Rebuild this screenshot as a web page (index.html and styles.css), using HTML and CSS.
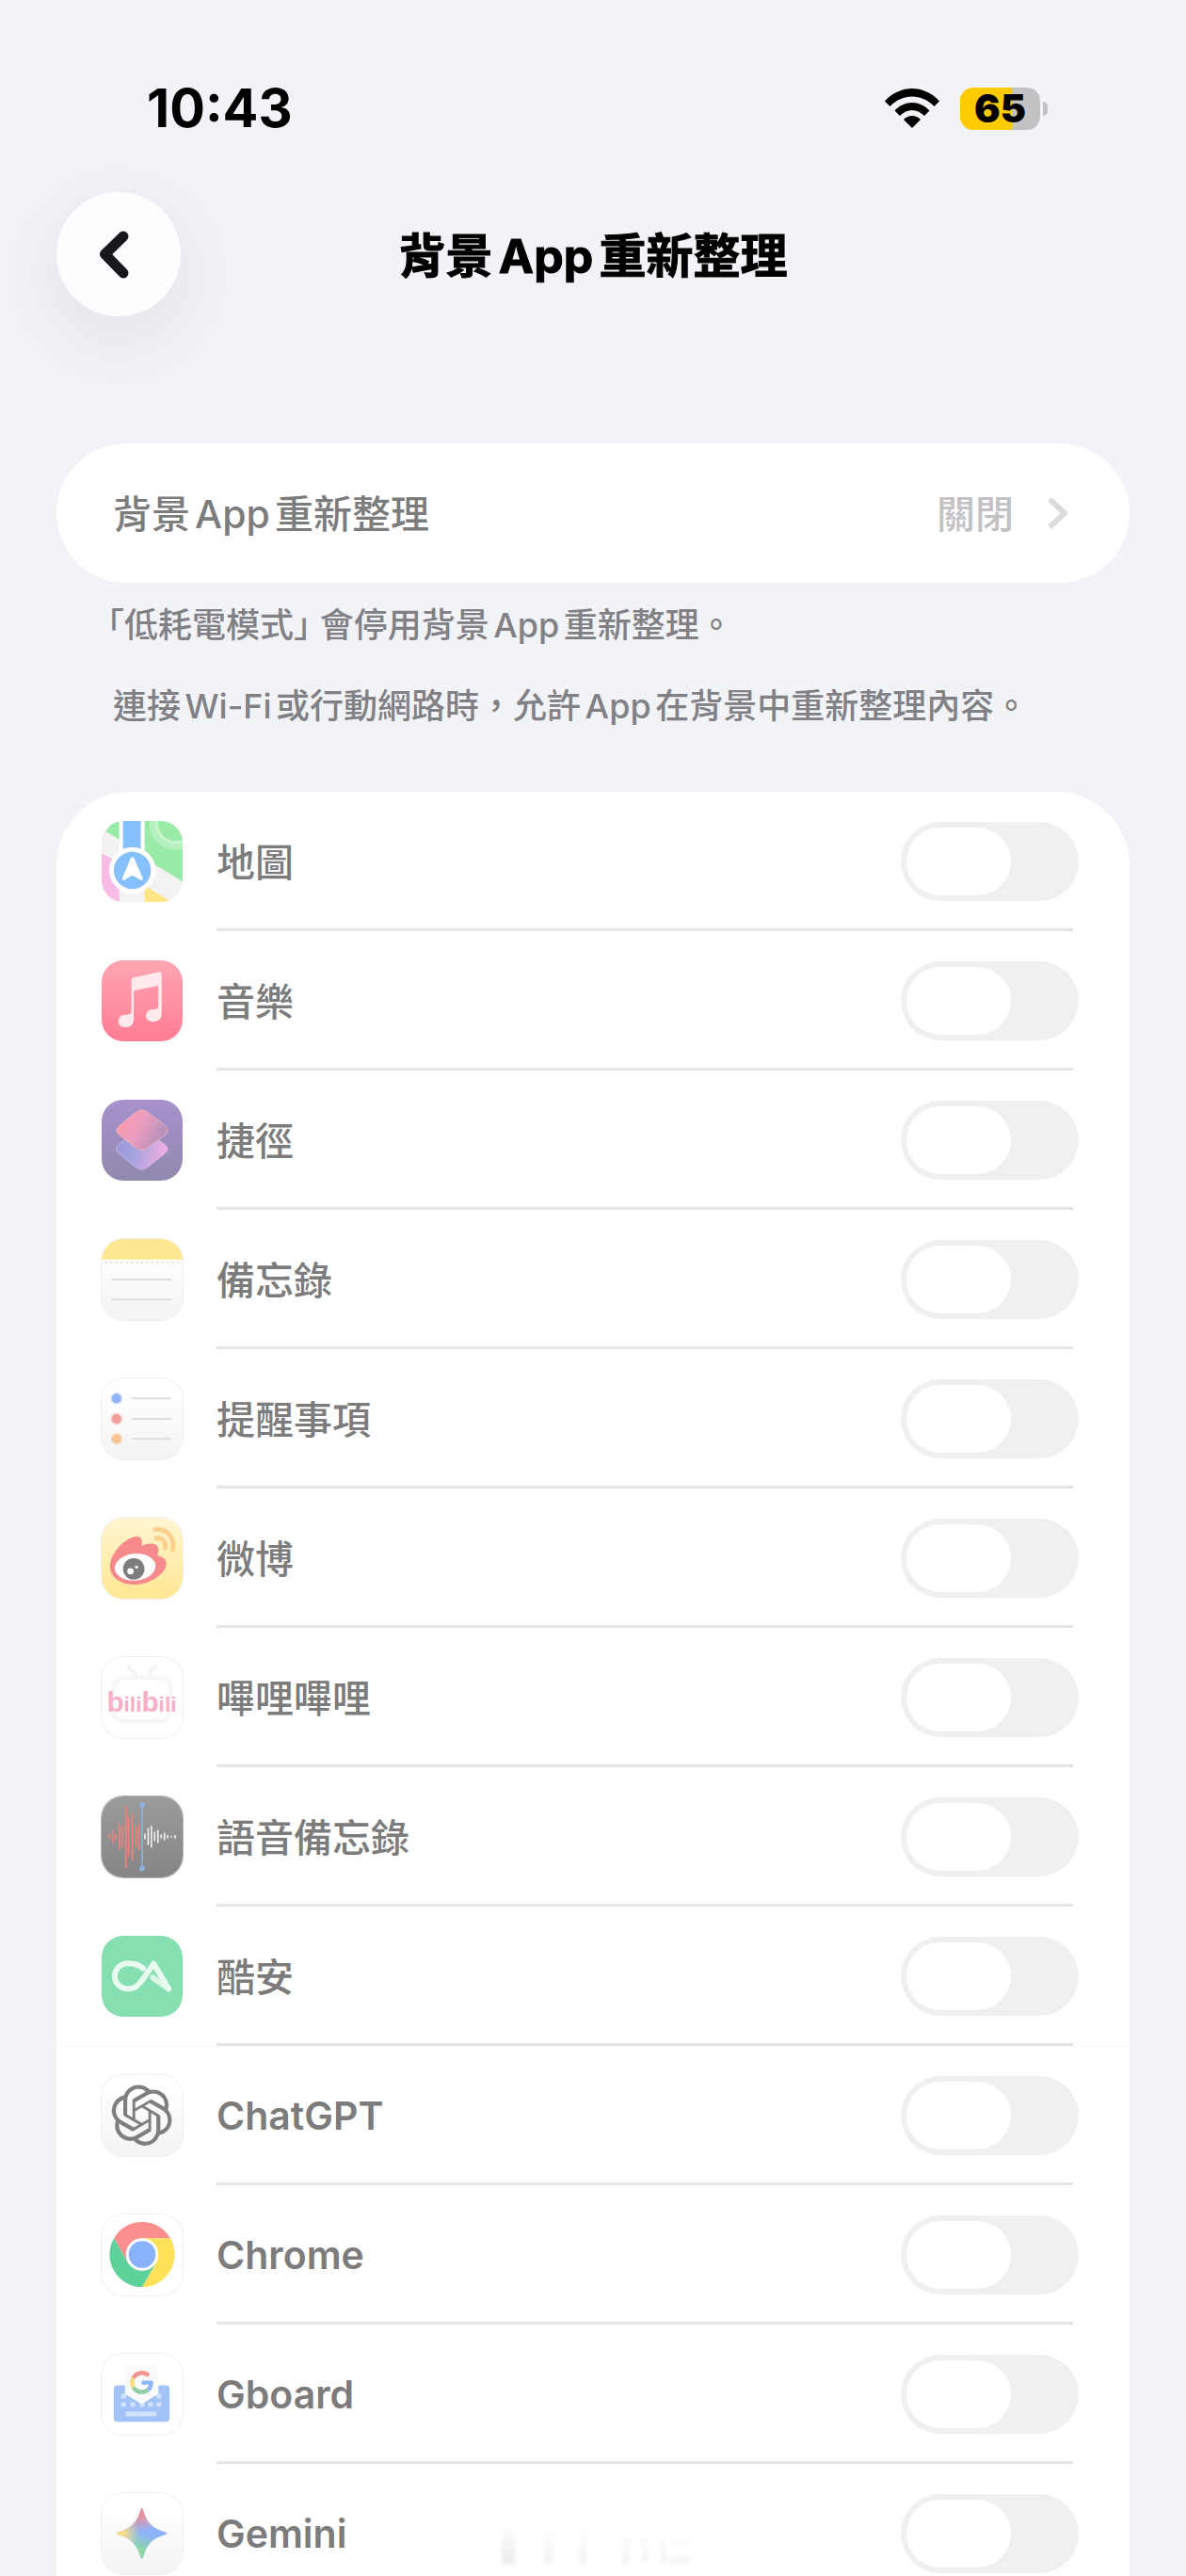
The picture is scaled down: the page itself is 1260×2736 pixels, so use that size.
FILE: index.html
```html
<!DOCTYPE html>
<html lang="zh-TW">
<head>
<meta charset="utf-8">
<meta name="viewport" content="width=device-width, initial-scale=1">
<title>背景 App 重新整理</title>
<link rel="stylesheet" href="styles.css">
</head>
<body>
<div class="screen">
  <div class="status">
    <span class="time">10:43</span>
    <div class="indicators">
      <svg class="wifi" viewBox="0 0 58 42" aria-label="Wi-Fi">
        <path d="M0 13.500C16-4.500 42-4.500 58 13.500L52.500 19C39 5 19 5 5.500 19Z"/>
        <path d="M10.500 23.500C21 12 37 12 47.500 23.500L42 29C34 21 24 21 16 29Z"/>
        <path d="M20 33C25 27.500 33 27.500 38 33L29 42Z"/>
      </svg>
      <div class="battery"><span class="battery-level">65</span></div>
    </div>
  </div>

  <header class="nav">
    <button class="back" type="button" aria-label="返回">
      <svg viewBox="0 0 132 132"><path d="M71 47 51.500 66 71 86"/></svg>
    </button>
    <h1>背景App重新整理</h1>
  </header>

  <main class="content">
    <button class="card link-row" type="button">
      <span>背景App重新整理</span>
      <span class="value">關閉</span>
      <svg class="chevron" viewBox="0 0 22 34"><path d="M4 4 18 17 4 30"/></svg>
    </button>
    <p class="hint quoted"><span class="half">「</span>低耗電模式<span class="half">」</span> 會停用背景App重新整理。</p>
    <p class="hint second">連接Wi-Fi或行動網路時，允許App在背景中重新整理內容。</p>

    <ul class="card apps">
      <li><label class="app">
        <svg class="icon" viewBox="0 0 87 87">
          <rect width="87" height="87" fill="#f3f3f3"/>
          <path d="M0 18 12 0H19V20L4 11Z" fill="#9aeaa8"/>
          <path d="M46 0H87V65L46 40Z" fill="#9aeaa8"/>
          <circle cx="80" cy="2" r="25" fill="none" stroke="#b5f1bf" stroke-width="8"/>
          <circle cx="80" cy="2" r="21" fill="none" stroke="#c9f5d0" stroke-width="3"/>
          <path d="M0 35 19 44V87H0Z" fill="#f9bce6"/>
          <path d="M46 69 75 87H46Z" fill="#ffe583"/>
          <path d="M19 0H46V50H19Z" fill="#fff"/>
          <path d="M23 0H42V40H23Z" fill="#86c0fd"/>
          <circle cx="33" cy="53" r="25" fill="#fff"/>
          <circle cx="33" cy="53" r="20" fill="#86c0fd"/>
          <path d="M33 39C34.500 39 35 40 35.500 41.500L44 61C45 64 43 64.500 41 63L33 58.500 25 63C23 64.500 21 64 22.500 61L30.500 41.500C31 40 31.500 39 33 39Z" fill="#fff"/>
        </svg>
        <span class="name">地圖</span><input class="switch" type="checkbox" role="switch" disabled></label></li>
      <li><label class="app">
        <svg class="icon" viewBox="0 0 87 87">
          <defs><linearGradient id="music" x2="0" y2="1"><stop stop-color="#ffa5b4"/><stop offset="1" stop-color="#ff7d93"/></linearGradient></defs>
          <rect width="87" height="87" fill="url(#music)"/>
          <path d="M32 21Q32 19 34 18.500L62 12.500Q64.500 12 64.500 15V57C64.500 63 60.500 66 55.500 66 51 66 47.500 63.500 47.500 59.500 47.500 55 51 52.500 55 52.500 59 52.500 61 52 61 49V29Q61 27 59 27.500L36.500 32Q34.500 32.500 34.500 34V63C34.500 69 30.500 72 26 72 21 72 18 69.500 18 65.500 18 61 21.500 58.500 25.500 58.500 29.500 58 32 58 32 54Z" fill="#ffe9ed"/>
        </svg>
        <span class="name">音樂</span><input class="switch" type="checkbox" role="switch" disabled></label></li>
      <li><label class="app">
        <svg class="icon" viewBox="0 0 87 87">
          <defs>
            <linearGradient id="sc" x2="0" y2="1"><stop stop-color="#a791cd"/><stop offset="1" stop-color="#9189ae"/></linearGradient>
            <linearGradient id="sc1" x1="0" y1="0" x2="1" y2=".4"><stop stop-color="#fb9ba4"/><stop offset=".5" stop-color="#ee9dbe"/><stop offset="1" stop-color="#b792bb"/></linearGradient>
            <linearGradient id="sc2" x1="0" y1="0" x2="1" y2=".2"><stop stop-color="#9a95d6"/><stop offset=".45" stop-color="#a3a3e0"/><stop offset="1" stop-color="#eeaee0"/></linearGradient>
          </defs>
          <rect width="87" height="87" fill="url(#sc)"/>
          <path d="M36 35Q43 29 50 35L68 48Q74 53 68 58L50 72Q43 78 36 72L19 58Q13 53 19 48Z" fill="url(#sc2)" stroke="#c9b5e4" stroke-width="1"/>
          <path d="M36 14Q43 8 50 14L68 28Q74 33 68 38L50 51Q43 57 36 51L19 38Q13 33 19 28Z" fill="url(#sc1)" stroke="#f0b0c4" stroke-width="1"/>
        </svg>
        <span class="name">捷徑</span><input class="switch" type="checkbox" role="switch" disabled></label></li>
      <li><label class="app">
        <svg class="icon outlined" viewBox="0 0 87 87">
          <defs><linearGradient id="paper" x2="0" y2="1"><stop offset=".2" stop-color="#fff"/><stop offset="1" stop-color="#f3f3f3"/></linearGradient></defs>
          <rect width="87" height="87" fill="url(#paper)"/>
          <rect width="87" height="22" fill="#ffe791"/>
          <path d="M4 25H86" stroke="#d6d6d6" stroke-width="1.500" stroke-dasharray="2 3.500"/>
          <path d="M11 43.500H75M11 65H75" stroke="#dedede" stroke-width="2"/>
        </svg>
        <span class="name">備忘錄</span><input class="switch" type="checkbox" role="switch" disabled></label></li>
      <li><label class="app">
        <svg class="icon outlined" viewBox="0 0 87 87">
          <rect width="87" height="87" fill="url(#paper)"/>
          <g stroke-width="3" stroke-opacity=".35">
          <circle cx="16" cy="21.500" r="5" fill="#8fb4fb" stroke="#8fb4fb"/>
          <circle cx="16" cy="43.500" r="5" fill="#f29c97" stroke="#f29c97"/>
          <circle cx="16" cy="65" r="5" fill="#f7c393" stroke="#f7c393"/></g>
          <path d="M32 21.500H75M32 43.500H75M32 65H75" stroke="#dedede" stroke-width="2"/>
        </svg>
        <span class="name">提醒事項</span><input class="switch" type="checkbox" role="switch" disabled></label></li>
      <li><label class="app">
        <svg class="icon outlined" viewBox="0 0 87 87">
          <defs><linearGradient id="wb" x2="0" y2="1"><stop stop-color="#fff6d2"/><stop offset="1" stop-color="#ffe793"/></linearGradient></defs>
          <rect width="87" height="87" fill="url(#wb)"/>
          <path d="M9 52C9 40 22 23 37 20 43 19 44 25 43 30 49 27 60 26 61 33 62 37 59 40 61 41 66 43 69 44 69.500 49 70 57 60 65 50 69 40 73 27 73 19 68 12 64 9 58 9 52Z" fill="#f68a8d"/>
          <ellipse cx="36" cy="53" rx="22" ry="14.500" fill="#fff" transform="rotate(-5 36 53)"/>
          <circle cx="34.500" cy="55" r="11.500" fill="#7d7d7d"/>
          <circle cx="31" cy="57.500" r="3.500" fill="#fff"/><circle cx="37.500" cy="53" r="1.700" fill="#fff"/>
          <path d="M57.500 12.500C70 11 79 21 76.500 34.500M58.500 22C65 21 69.500 26 68 32" fill="none" stroke="#ffcf8d" stroke-width="5" stroke-linecap="round"/>
        </svg>
        <span class="name">微博</span><input class="switch" type="checkbox" role="switch" disabled></label></li>
      <li><label class="app">
        <svg class="icon outlined" viewBox="0 0 87 87">
          <rect width="87" height="87" fill="#fff"/>
          <path d="M29 11 36 19M57 11 50 19" stroke="#f6f6f6" stroke-width="5" stroke-linecap="round"/>
          <rect x="13" y="22" width="61" height="47" rx="11" fill="none" stroke="#f7f7f7" stroke-width="5"/>
          <text class="bili" x="43" y="59"><tspan class="bili-b">b</tspan>ili<tspan class="bili-b">b</tspan>ili</text>
        </svg>
        <span class="name">嗶哩嗶哩</span><input class="switch" type="checkbox" role="switch" disabled></label></li>
      <li><label class="app">
        <svg class="icon rim" viewBox="0 0 87 87">
          <defs><linearGradient id="vm" x2="0" y2="1"><stop stop-color="#9b9b9b"/><stop offset="1" stop-color="#858585"/></linearGradient></defs>
          <rect width="87" height="87" fill="url(#vm)"/>
          <path d="M8 41V45M12 37V50M15 40V46M19 28V58M22 31V55M26 10V77M29 22V64M33 18V69M37 32V54M40 29V58" stroke="#e0857f" stroke-width="2"/>
          <path d="M46.500 40V46M50 34V52M53.500 31V55M57 38V48M60.500 36V50M64 41V45M67.500 39V47M71 41.500V45M75 42.500V44M79 41.500V45" stroke="#efefef" stroke-width="1.700"/>
          <path d="M43.500 9V77" stroke="#8ab4e6" stroke-width="1.700"/>
          <circle cx="43.500" cy="9" r="2.800" fill="#8ab4e6"/><circle cx="43.500" cy="77.500" r="2.800" fill="#8ab4e6"/>
        </svg>
        <span class="name">語音備忘錄</span><input class="switch" type="checkbox" role="switch" disabled></label></li>
      <li class="seam"><label class="app">
        <svg class="icon" viewBox="0 0 87 87">
          <rect width="87" height="87" fill="#86dfb1"/>
          <g fill="none" stroke-width="6" stroke-linecap="round" stroke-linejoin="round">
          <path d="M55 45 72 57" stroke="#dbf6e7"/>
          <path d="M44.500 35C40 30.500 34 29.500 28 29.500 20 30 14 36 14 43.500 14 51 20 57 28 57 36 57 40 53 44 47L56 30 72 57" stroke="#e9faf1"/></g>
        </svg>
        <span class="name">酷安</span><input class="switch" type="checkbox" role="switch" disabled></label></li>
      <li><label class="app">
        <svg class="icon outlined" viewBox="0 0 87 87">
          <rect width="87" height="87" fill="url(#paper)"/>
          <path transform="translate(10.500 10.500) scale(2.720)" fill="#7f7f7f" d="M22.2819 9.8211a5.9847 5.9847 0 0 0-.5157-4.9108 6.0462 6.0462 0 0 0-6.5098-2.9A6.0651 6.0651 0 0 0 4.9807 4.1818a5.9847 5.9847 0 0 0-3.9977 2.9 6.0462 6.0462 0 0 0 .7427 7.0966 5.98 5.98 0 0 0 .511 4.9107 6.051 6.051 0 0 0 6.5146 2.9001A5.9847 5.9847 0 0 0 13.2599 24a6.0557 6.0557 0 0 0 5.7718-4.2058 5.9894 5.9894 0 0 0 3.9977-2.9001 6.0557 6.0557 0 0 0-.7475-7.0729zm-9.022 12.6081a4.4755 4.4755 0 0 1-2.8764-1.0408l.1419-.0804 4.7783-2.7582a.7948.7948 0 0 0 .3927-.6813v-6.7369l2.02 1.1686a.071.071 0 0 1 .038.052v5.5826a4.504 4.504 0 0 1-4.4945 4.4944zm-9.6607-4.1254a4.4708 4.4708 0 0 1-.5346-3.0137l.142.0852 4.783 2.7582a.7712.7712 0 0 0 .7806 0l5.8428-3.3685v2.3324a.0804.0804 0 0 1-.0332.0615L9.74 19.9502a4.4992 4.4992 0 0 1-6.1408-1.6464zM2.3408 7.8956a4.485 4.485 0 0 1 2.3655-1.9728V11.6a.7664.7664 0 0 0 .3879.6765l5.8144 3.3543-2.0201 1.1685a.0757.0757 0 0 1-.071 0l-4.8303-2.7865A4.504 4.504 0 0 1 2.3408 7.872zm16.5963 3.8558L13.1038 8.364 15.1192 7.2a.0757.0757 0 0 1 .071 0l4.8303 2.7913a4.4944 4.4944 0 0 1-.6765 8.1042v-5.6772a.79.79 0 0 0-.407-.667zm2.0107-3.0231l-.142-.0852-4.7735-2.7818a.7759.7759 0 0 0-.7854 0L9.409 9.2297V6.8974a.0662.0662 0 0 1 .0284-.0615l4.8303-2.7866a4.4992 4.4992 0 0 1 6.6802 4.66zM8.3065 12.863l-2.02-1.1638a.0804.0804 0 0 1-.038-.0567V6.0742a4.4992 4.4992 0 0 1 7.3757-3.4537l-.142.0805L8.704 5.459a.7948.7948 0 0 0-.3927.6813zm1.0976-2.3654l2.602-1.4998 2.6069 1.4998v2.9994l-2.5974 1.4997-2.6067-1.4997Z"/>
        </svg>
        <span class="name latin">ChatGPT</span><input class="switch" type="checkbox" role="switch" disabled></label></li>
      <li><label class="app">
        <svg class="icon outlined" viewBox="0 0 87 87">
          <rect width="87" height="87" fill="#fff"/>
          <g transform="translate(43.500 43)">
          <path d="M-30.300-17.500A35 35 0 0 1 30.300-17.500L0-17.500-15.200 8.750Z" fill="#fa8f8d"/>
          <path d="M30.300-17.500A35 35 0 0 1 0 35L15.200 8.750 0-17.500Z" fill="#ffe25a"/>
          <path d="M0 35A35 35 0 0 1-30.300-17.500L-15.200 8.750 15.200 8.750Z" fill="#5fd29b"/>
          <circle r="17.500" fill="#fff"/><circle r="14.500" fill="#8ab2f8"/></g>
        </svg>
        <span class="name latin">Chrome</span><input class="switch" type="checkbox" role="switch" disabled></label></li>
      <li><label class="app">
        <svg class="icon outlined" viewBox="0 0 87 87">
          <rect width="87" height="87" fill="#fff"/>
          <rect x="13" y="34" width="60" height="39" rx="4" fill="#a3c3f8"/>
          <path d="M21 43h5v5h-5zM59 43h5v5h-5zM21 52h5v5h-5zM31 52h5v5h-5zM41 52h5v5h-5zM50 52h5v5h-5zM59 52h5v5h-5zM26 62h33v5H26z" fill="#d2e2fb"/>
          <path d="M25 15Q25 13 27 13H59Q61 13 61 15V43L43 54 25 43Z" fill="#f9fafb"/>
          <g fill="none" stroke-width="4.500">
          <path d="M50.500 23.500A10.500 10.500 0 0 0 34 26" stroke="#f2938d"/>
          <path d="M34 26A10.500 10.500 0 0 0 34 36" stroke="#fcdc7c"/>
          <path d="M34 36A10.500 10.500 0 0 0 49.500 39" stroke="#8fcfa2"/>
          <path d="M49.500 39Q53.500 36 53 31H43" stroke="#8db5f7"/></g>
        </svg>
        <span class="name latin">Gboard</span><input class="switch" type="checkbox" role="switch" disabled></label></li>
      <li><label class="app">
        <svg class="icon outlined" viewBox="0 0 87 87">
          <defs>
            <radialGradient id="gr" gradientUnits="userSpaceOnUse" cx="41" cy="15" r="27"><stop offset=".3" stop-color="#f49095"/><stop offset="1" stop-color="#f49095" stop-opacity="0"/></radialGradient>
            <radialGradient id="gy" gradientUnits="userSpaceOnUse" cx="16" cy="42" r="25"><stop offset=".3" stop-color="#fbdf80"/><stop offset="1" stop-color="#fbdf80" stop-opacity="0"/></radialGradient>
            <radialGradient id="gg" gradientUnits="userSpaceOnUse" cx="39" cy="69" r="27"><stop offset=".3" stop-color="#8cd8a0"/><stop offset="1" stop-color="#8cd8a0" stop-opacity="0"/></radialGradient>
            <path id="star" d="M43 16Q44 16 44.500 18C48 32 55 38 69 42Q71 43 69 44.500C55 48 48 55 44.500 69Q43 72 42 69C38 55 31 48 17.500 44.500Q15 43 17.500 42C31 38 38 32 42 18Q42.500 16 43 16Z"/>
          </defs>
          <rect width="87" height="87" fill="url(#paper)"/>
          <use href="#star" fill="#8db4fa"/><use href="#star" fill="url(#gg)"/><use href="#star" fill="url(#gy)"/><use href="#star" fill="url(#gr)"/>
        </svg>
        <span class="name latin">Gemini</span><input class="switch" type="checkbox" role="switch" disabled></label></li>
    </ul>
  </main>

  <svg class="ghost" viewBox="0 0 210 40" aria-hidden="true">
    <defs><linearGradient id="fade" x2="0" y2="1"><stop stop-color="#000" stop-opacity=".01"/><stop offset="1" stop-color="#000" stop-opacity=".08"/></linearGradient></defs>
    <g fill="url(#fade)"><path d="M4 0h14v38H4z"/><path d="M49 4h9v34h-9zM87 4h7v34h-7zM133 10h7v28h-7zM153 10h6v28h-6zM173 10h6v28h-6zM182 14h22v4h-22zM182 31h22v6h-22z" opacity=".6"/></g>
  </svg>
</div>
</body>
</html>
```

FILE: styles.css
```css
* { box-sizing: border-box; }

body {
  margin: 0;
  background: #f2f3f7;
  color: #7c7c7c;
  font-family: Inter, "Noto Sans CJK TC", sans-serif;
  font-size: 41px;
  font-weight: 500;
  text-autospace: normal;
}

button {
  border: 0;
  padding: 0;
  font: inherit;
  color: inherit;
}

.screen {
  position: relative;
  display: flex;
  flex-direction: column;
  height: 100vh;
  overflow: hidden;
}

/* status bar */
.status {
  display: flex;
  align-items: center;
  justify-content: space-between;
  height: 64px;
  margin-top: 83px;
  padding: 0 147px 0 156px;
  color: #000;
}
.time { font-size: 56px; font-weight: 700; }
.indicators { display: flex; align-items: center; gap: 22px; }
.wifi { width: 58px; height: 42px; }
.battery { display: flex; align-items: center; gap: 3px; }
.battery-level {
  width: 85px;
  border-radius: 14px;
  background: linear-gradient(90deg, #fecb00 65%, #c2c2c4 65%);
  font-size: 41px;
  font-weight: 900;
  line-height: 45px;
  text-align: center;
}
.battery::after {
  content: "";
  width: 5px;
  height: 15px;
  border-radius: 0 5px 5px 0;
  background: #c2c2c4;
}

/* navigation bar */
.nav {
  display: grid;
  grid-template-columns: 132px 1fr 132px;
  align-items: center;
  margin: 57px 60px 135px;
}
.back {
  width: 132px;
  height: 132px;
  border-radius: 50%;
  background: #fcfdff;
  box-shadow: 0 22px 90px rgba(0, 0, 0, .08);
}
.back svg { display: block; }
.back path, .chevron path {
  fill: none;
  stroke: #17181b;
  stroke-width: 11px;
  stroke-linecap: round;
  stroke-linejoin: round;
}
h1 {
  margin: 0;
  padding-bottom: 4px;
  color: #000;
  font-size: 50px;
  font-weight: 700;
  text-align: center;
  -webkit-text-stroke: 1px;
}

/* scrolling content */
.content {
  flex: 1;
  min-height: 0;
  padding: 0 60px;
  overflow-y: auto;
  scrollbar-width: none;
}
.card { background: #fff; }
.link-row {
  display: flex;
  align-items: center;
  gap: 36px;
  width: 100%;
  height: 148px;
  padding: 0 65px 0 60px;
  border-radius: 74px;
}
.link-row span { padding-bottom: 4px; }
.value { margin-left: auto; color: #c2c2c4; }
.chevron { width: 22px; height: 34px; }
.chevron path { stroke: #dcdcde; stroke-width: 6px; }

.hint {
  margin: 20px 60px 0;
  color: #818185;
  font-size: 36px;
  line-height: 50px;
}
.hint.quoted { text-indent: -6px; }
.hint.second { margin-top: 36px; }
.half { font-feature-settings: "halt"; }

.apps {
  margin: 66px 0 0;
  padding: 0;
  border-radius: 78px 78px 0 0;
  list-style: none;
}
.apps li {
  background: linear-gradient(#e5e5e5, #e5e5e5) 170px 100% / calc(100% - 230px) 3px no-repeat;
}
.apps .seam { box-shadow: 0 1px #f8f8f8; }
.app {
  display: flex;
  align-items: center;
  gap: 36px;
  height: 148px;
  padding: 0 54px 0 48px;
}
.icon {
  width: 86px;
  height: 86px;
  border-radius: 23px;
}
.outlined { box-shadow: 0 0 0 1px #efefef; }
.rim { box-shadow: 0 0 0 1px #b5b5b5; }
.bili {
  font: 700 23px "Liberation Sans", sans-serif;
  fill: #f8afc7;
  text-anchor: middle;
}
.bili-b { font-size: 30px; }
.name { flex: 1; padding-bottom: 4px; }
.latin { padding-bottom: 0; font-weight: 600; }

.switch {
  appearance: none;
  width: 189px;
  height: 84px;
  margin: 0;
  padding: 6px;
  border-radius: 42px;
  background: #f0f0f0;
}
.switch::before {
  content: "";
  display: block;
  width: 111px;
  height: 72px;
  border-radius: 36px;
  background: #fff;
}
.switch:checked { background: #9be3ac; }
.switch:checked::before { margin-left: auto; }

/* faint trace above the bottom edge */
.ghost {
  position: absolute;
  bottom: 11px;
  left: 42%;
  width: 210px;
  height: 40px;
  filter: blur(2px);
  pointer-events: none;
}
```
